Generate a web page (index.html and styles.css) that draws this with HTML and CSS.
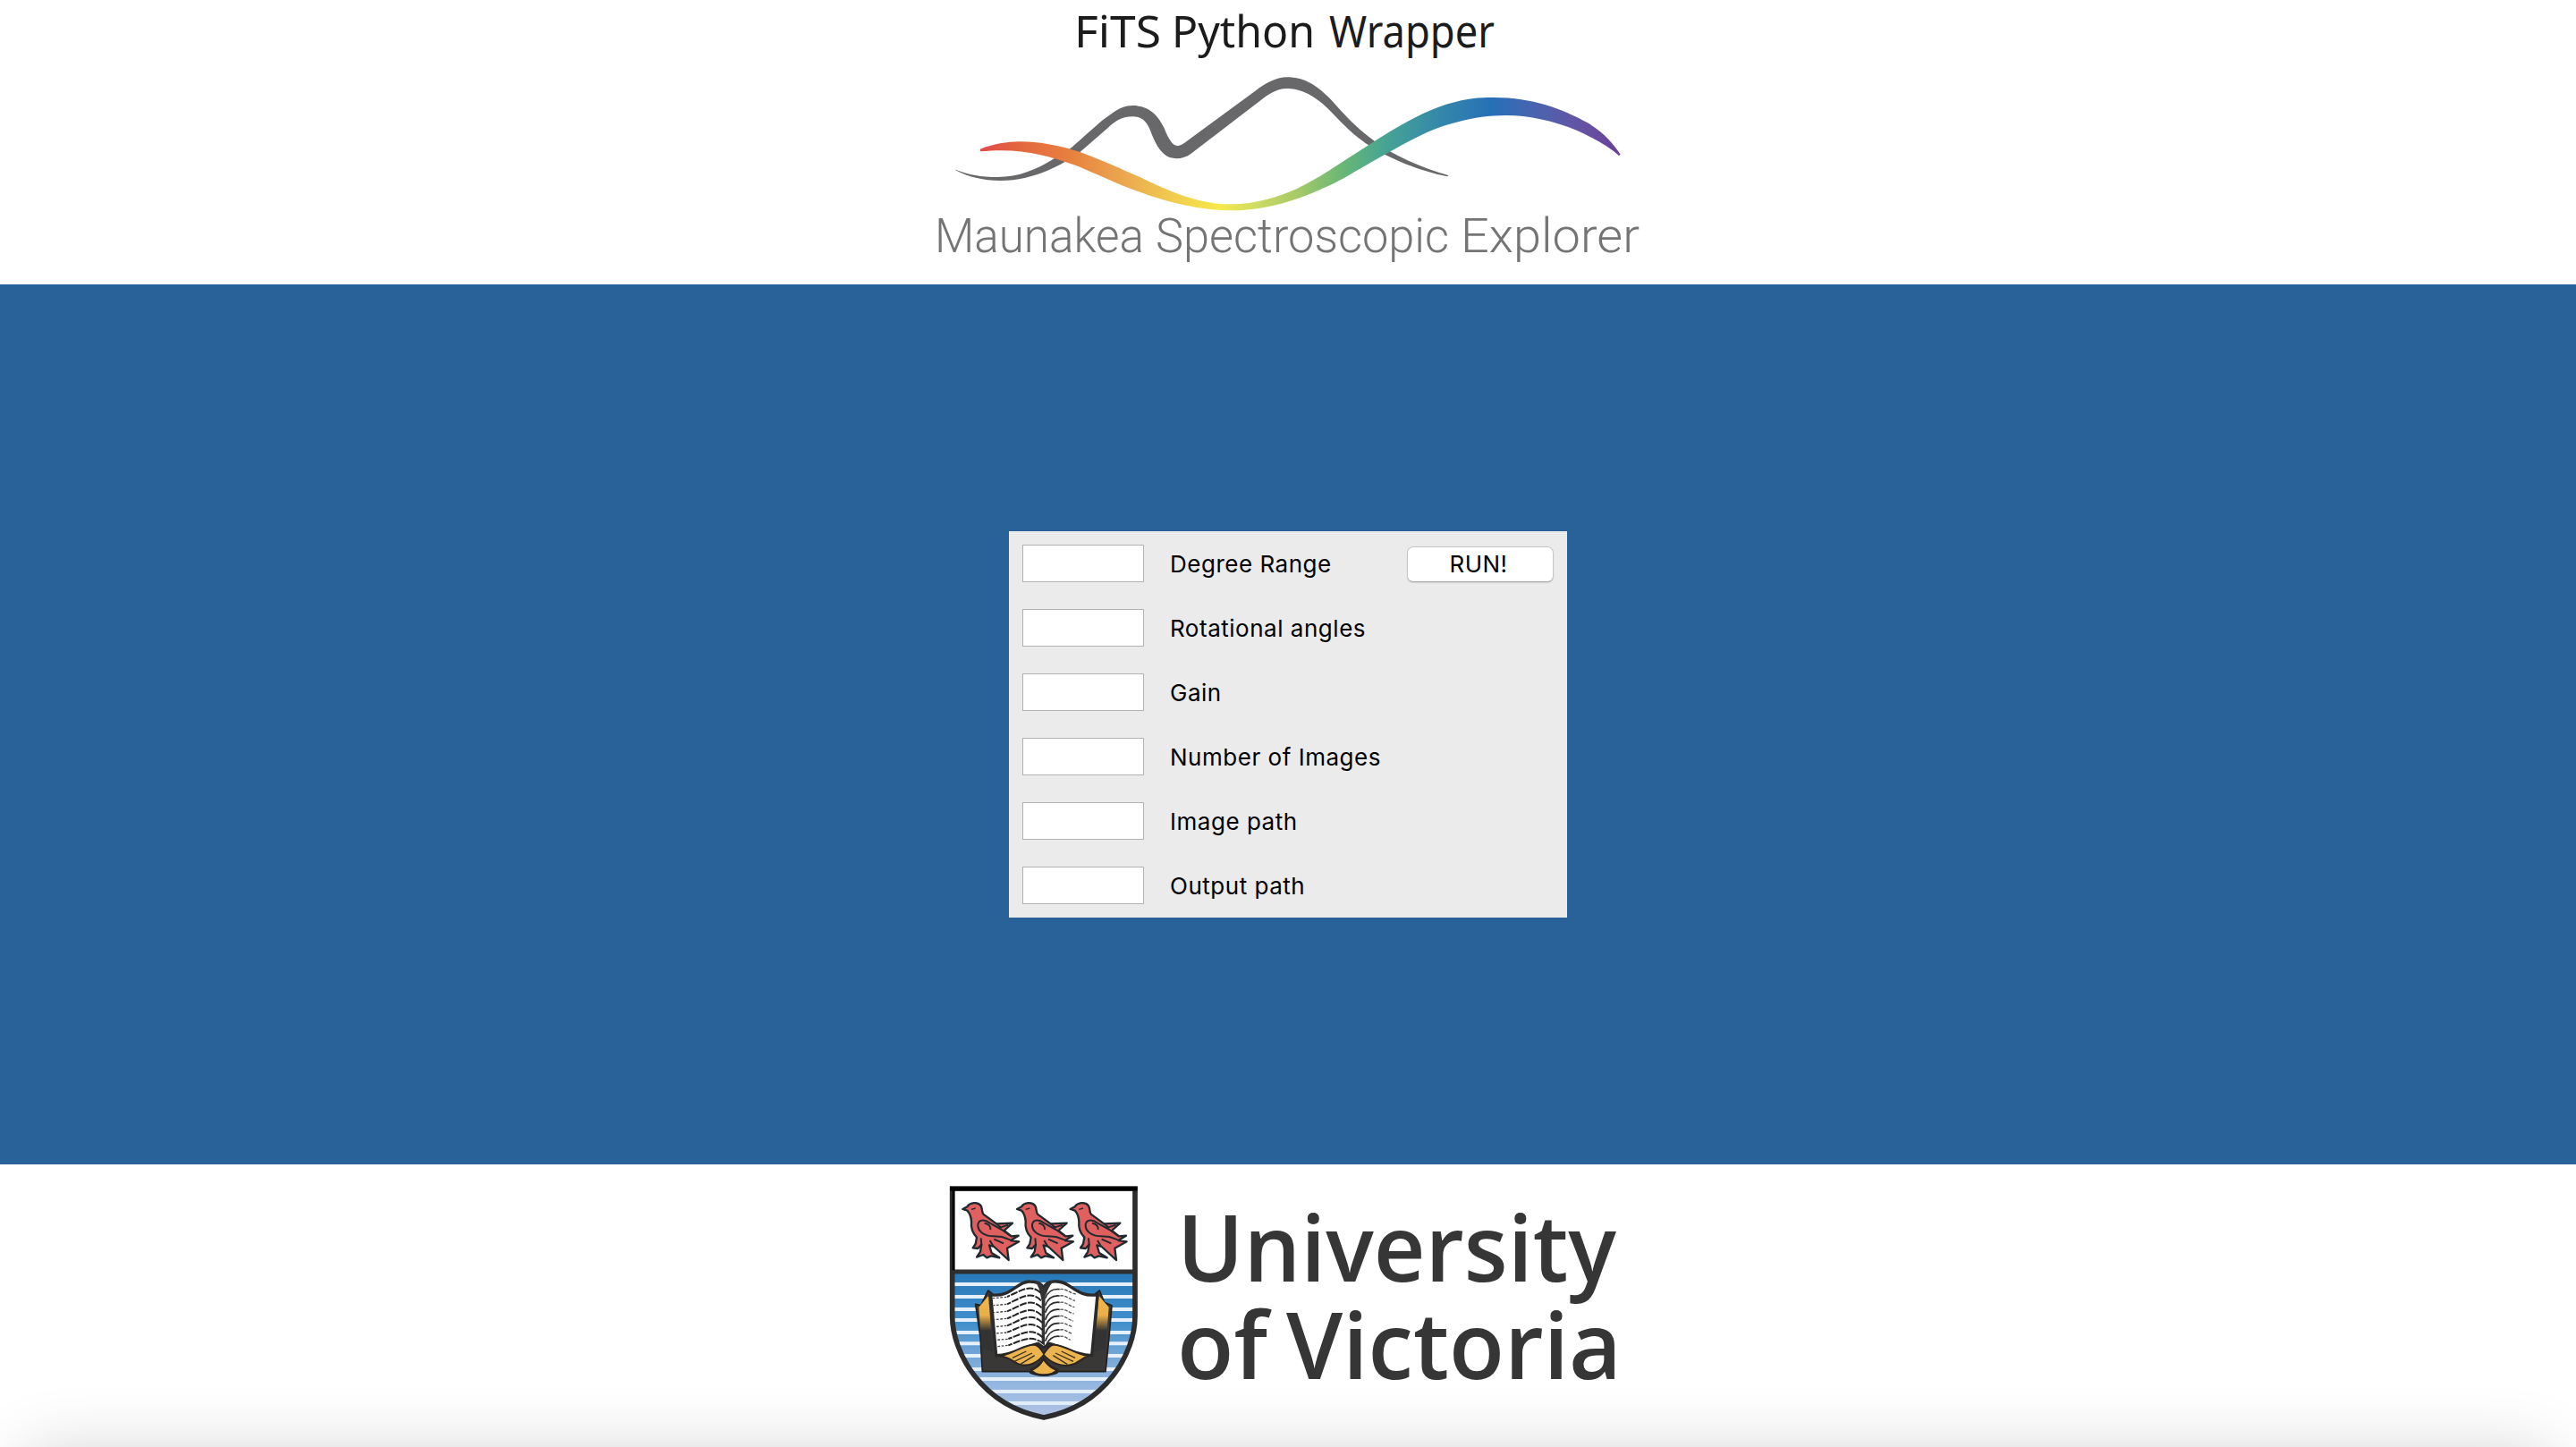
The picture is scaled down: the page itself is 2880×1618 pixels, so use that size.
FILE: index.html
```html
<!DOCTYPE html>
<html lang="en">
<head>
<meta charset="utf-8">
<title>FiTS Python Wrapper</title>
<link rel="stylesheet" href="styles.css">
</head>
<body>
<header class="banner">
  <svg class="banner-logo" viewBox="1030 0 820 318" width="820" height="318">
    <defs>
      <linearGradient id="spectrum" gradientUnits="userSpaceOnUse" x1="198" y1="0" x2="2343" y2="0">
        <stop offset="0" stop-color="#e04a4a"/>
        <stop offset=".06" stop-color="#e3663f"/>
        <stop offset=".14" stop-color="#e8803f"/>
        <stop offset=".23" stop-color="#ebaa50"/>
        <stop offset=".3" stop-color="#f1cb4f"/>
        <stop offset=".375" stop-color="#f6e94a"/>
        <stop offset=".43" stop-color="#cfdc62"/>
        <stop offset=".5" stop-color="#a2c968"/>
        <stop offset=".57" stop-color="#66b676"/>
        <stop offset=".64" stop-color="#44a296"/>
        <stop offset=".71" stop-color="#378aa8"/>
        <stop offset=".8" stop-color="#2670b8"/>
        <stop offset=".87" stop-color="#4b63af"/>
        <stop offset=".94" stop-color="#6553a3"/>
        <stop offset="1" stop-color="#6a3f98"/>
      </linearGradient>
    </defs>
    <text class="app-title" x="1201" y="53" textLength="97" lengthAdjust="spacingAndGlyphs">FiTS</text>
    <text class="app-title" x="1310" y="53" textLength="160" lengthAdjust="spacingAndGlyphs">Python</text>
    <text class="app-title" x="1486" y="53" textLength="185" lengthAdjust="spacingAndGlyphs">Wrapper</text>
    <g transform="translate(1030 0) scale(.33333)">
      <path fill="#68686a" d="M115 569C160 586 200 594 255 594C330 594 385 568 436 538L500 498C540 465 600 405 640 380C662 363 685 354 710 354C770 354 798 395 815 430C830 470 845 489 858 489C870 489 882 480 895 470L1120 305C1160 275 1195 259 1225 259C1290 259 1330 290 1375 335C1420 385 1460 430 1520 473C1590 525 1680 563 1768 588L1765 592C1670 574 1570 532 1500 487C1440 447 1400 400 1365 365C1310 312 1265 297 1225 297C1190 297 1160 320 1140 335L905 515C880 535 840 537 818 520C790 498 777 460 765 430C750 400 735 391 710 391C670 391 645 410 625 430L530 512C475 550 380 606 265 606C210 606 160 595 115 571Z"/>
      <path fill="url(#spectrum)" d="M198 500C240 483 290 475 330 475C400 475 450 488 500 500C570 520 680 570 750 602C850 650 940 685 1040 685C1120 685 1200 660 1260 633C1340 595 1400 550 1500 487C1600 423 1700 362 1800 340C1830 331 1870 327 1920 327C2050 327 2150 365 2235 412C2290 445 2320 480 2345 518L2340 522C2310 495 2260 465 2200 438C2120 405 2040 387 1960 387C1850 387 1750 420 1690 447C1600 490 1500 550 1430 590C1350 635 1200 706 1040 706C900 706 760 655 700 632C640 610 560 570 510 552C420 520 330 495 198 508Z"/>
    </g>
    <text class="logo-name" x="1045" y="282" textLength="234" lengthAdjust="spacingAndGlyphs">Maunakea</text>
    <text class="logo-name" x="1292" y="282" textLength="328" lengthAdjust="spacingAndGlyphs">Spectroscopic</text>
    <text class="logo-name" x="1633" y="282" textLength="200" lengthAdjust="spacingAndGlyphs">Explorer</text>
  </svg>
</header>

<main class="stage">
  <form class="panel">
    <div class="row"><input class="entry" type="text" id="f1"><label class="caption" for="f1">Degree Range</label><button class="run" type="button">RUN!</button></div>
    <div class="row"><input class="entry" type="text" id="f2"><label class="caption" for="f2">Rotational angles</label></div>
    <div class="row"><input class="entry" type="text" id="f3"><label class="caption" for="f3">Gain</label></div>
    <div class="row"><input class="entry" type="text" id="f4"><label class="caption" for="f4">Number of Images</label></div>
    <div class="row"><input class="entry" type="text" id="f5"><label class="caption" for="f5">Image path</label></div>
    <div class="row"><input class="entry" type="text" id="f6"><label class="caption" for="f6">Output path</label></div>
  </form>
</main>

<footer class="foot">
  <svg class="foot-logo" viewBox="1030 1302 820 316" width="820" height="316">
    <defs>
      <linearGradient id="sea" gradientUnits="userSpaceOnUse" x1="0" y1="385" x2="0" y2="870">
        <stop offset="0" stop-color="#2879b8"/>
        <stop offset=".35" stop-color="#4290cb"/>
        <stop offset=".6" stop-color="#7aa9d8"/>
        <stop offset="1" stop-color="#b6c9ea"/>
      </linearGradient>
      <linearGradient id="edge" x1="0" y1="0" x2="0" y2="1">
        <stop offset="0" stop-color="#f2b84a"/>
        <stop offset=".35" stop-color="#e9ae48"/>
        <stop offset=".62" stop-color="#333"/>
      </linearGradient>
      <clipPath id="shield"><path d="M74 102V530C74 650 170 830 381 870C592 830 687 650 687 530V102Z"/></clipPath>
      <g id="bird" stroke="#1f2a30" stroke-width="7" stroke-linejoin="round">
        <path fill="#e0605f" d="M109 171L124 163C133 149 160 145 170 160C176 170 172 180 178 188L222 220L276 218L248 243L272 262L296 260L270 276L298 280L258 302L263 342L214 297L198 292L206 318L232 334L204 328L190 334L178 324L156 332L168 314L172 290L160 303L143 301L152 288L156 266C140 250 136 232 138 212C137 198 132 184 124 176Z"/>
        <path fill="none" stroke-width="6" d="M212 262C180 262 158 244 160 222C165 204 184 206 200 218L240 240L272 262M182 218C196 220 204 230 202 240M212 262L240 264L268 274M214 272L246 286M222 220L236 232L262 224M200 276L212 296M172 290L170 268"/>
        <path fill="none" stroke-width="4" d="M138 172L152 168"/>
      </g>
    </defs>
    <g transform="translate(1040 1295) scale(.33333)">
      <g clip-path="url(#shield)">
        <path fill="#fff" d="M60 90H700V380H60Z"/>
        <path fill="url(#sea)" d="M60 380H700V880H60Z"/>
        <path stroke="#e6f0fa" stroke-width="12" d="M60 423H700M60 465H700M60 507H700M60 543H700M60 585H700M60 622H700M60 663H700M60 708H700M60 741H700M60 783H700M60 822H700"/>
      </g>
      <path stroke="#302f2f" stroke-width="15" d="M74 381H687"/>
      <path fill="none" stroke="#2d2d2d" stroke-width="17" d="M74 102V530C74 650 170 830 381 870C592 830 687 650 687 530V102Z"/>
      <path stroke="#000" stroke-width="13" d="M66 103H695"/>
      <path stroke="#000" stroke-width="8" d="M78 108V376"/>
      <use href="#bird"/>
      <use href="#bird" x="182"/>
      <use href="#bird" x="361"/>

      <path fill="#3a3837" stroke="#221f1f" stroke-width="5" stroke-linejoin="round" d="M152 490L170 494L194 444L212 458L382 600L550 458L568 444L584 484L609 494L600 600L588 716H430C420 732 340 732 332 716H175L168 600Z"/>
      <path fill="url(#edge)" d="M163 500L195 462L210 650L174 640Z"/>
      <path fill="url(#edge)" d="M599 500L566 462L550 650L588 640Z"/>
      <path fill="#fff" stroke="#2b2a2a" stroke-width="10" stroke-linejoin="round" d="M203 458C270 470 290 412 335 414C358 414 374 422 380 436C386 422 400 412 425 414C470 412 490 470 561 458L542 662C480 660 430 628 400 622L381 636L362 622C330 628 280 660 221 662Z"/>
      <path fill="#353334" d="M346 410C364 412 376 424 382 436C390 422 402 412 418 410C400 424 396 440 386 462L384 630L374 622V478C368 450 366 426 346 410Z"/>
      <path fill="none" stroke="#242424" stroke-width="6" stroke-dasharray="24 4" d="M370 452C336 418 300 448 258 465M372 478C336 440 300 472 258 490M374 502C336 464 300 498 258 514M374 528C336 490 300 522 258 538M376 552C336 512 300 546 258 562M376 576C336 538 300 570 258 584M378 602C338 564 306 592 262 606M380 622C338 590 306 612 262 628"/>
      <path fill="none" stroke="#444" stroke-width="4" stroke-dasharray="8 5" d="M256 466L210 470M256 490L212 494M256 514L214 518M256 538L216 542M256 562L218 566M256 585L220 588M260 607L222 610M260 628L224 632"/>
      <path fill="none" stroke="#2d2d2d" stroke-width="5" d="M386 470C396 442 416 438 434 440M386 494C396 466 416 460 434 462M386 518C396 488 416 482 434 484M386 542C396 512 416 506 434 508M386 566C396 536 416 528 434 530M386 590C396 560 416 552 434 554M386 614C396 584 416 574 434 576M388 628C400 602 418 596 434 598"/>
      <path fill="none" stroke="#555" stroke-width="4" stroke-dasharray="11 4" d="M436 440C452 436 468 452 488 456M436 462C452 458 468 474 486 478M436 484C452 480 466 496 484 500M436 508C452 504 464 518 482 522M436 530C450 526 462 542 480 546M436 554C450 550 462 562 478 566M436 576C450 572 460 584 474 588M436 598C450 594 460 606 470 610"/>
      <path fill="#ecb44f" stroke="#2b2522" stroke-width="6" d="M232 664C280 658 310 624 350 626C366 628 374 644 381 656C390 644 398 628 412 626C450 624 484 658 532 664C500 672 500 690 470 694C440 702 400 684 381 660C362 684 330 702 300 692C280 686 270 668 232 664Z"/>
      <path fill="none" stroke="#3a2f24" stroke-width="4" d="M276 670L322 648M282 682L342 654M302 692L350 662M486 670L440 648M480 682L420 654M460 692L412 662"/>
      <path fill="#ecb44f" stroke="#2b2522" stroke-width="8" stroke-linejoin="round" d="M380 672C370 692 356 704 338 710C350 734 410 734 426 710C406 704 392 692 380 672Z"/>
    </g>
    <text class="uni" x="1316" y="1433" textLength="491" lengthAdjust="spacingAndGlyphs">University</text>
    <text class="uni" x="1316" y="1541.500" textLength="101" lengthAdjust="spacingAndGlyphs">of</text>
    <text class="uni" x="1438" y="1541.500" textLength="375" lengthAdjust="spacingAndGlyphs">Victoria</text>
  </svg>
</footer>
</body>
</html>
```
FILE: styles.css
```css
* { box-sizing: border-box; }

body {
  margin: 0;
  height: 1618px;
  display: flex;
  flex-direction: column;
  background: #fff;
  overflow: hidden;
}

.banner,
.foot {
  display: flex;
  justify-content: center;
}

.banner { height: 318px; }
.foot { height: 316px; position: relative; overflow: hidden; }

/* soft shadow rising from the bottom edge of the screen */
.foot::after {
  content: "";
  position: absolute;
  left: 30px;
  right: 30px;
  top: 326px;
  height: 200px;
  box-shadow: 0 0 80px rgba(0, 0, 0, .2);
}

.banner-logo,
.foot-logo { display: block; }

.app-title {
  font: 400 48.500px "Noto Sans", sans-serif;
  fill: #1c1c1c;
}

.logo-name {
  font: 300 53px Roboto, sans-serif;
  fill: #747474;
}

.uni {
  font: 600 104px "Open Sans", sans-serif;
  fill: #363636;
}

.stage {
  flex: 1;
  display: flex;
  align-items: center;
  justify-content: center;
  background: #286299;
}

.panel {
  width: 624px;
  height: 432px;
  display: grid;
  grid-template-rows: repeat(6, 72px);
  background: #ebebeb;
}

.row {
  display: flex;
  align-items: center;
  padding: 0 15px;
}

.entry {
  width: 136px;
  height: 42px;
  margin: 0 29px 0 0;
  padding: 0 6px;
  border: 1px solid #b1b1b1;
  background: #fff;
}

.caption,
.run {
  font: 400 26px/36px Inter, sans-serif;
  letter-spacing: .52px;
  color: #000;
}

.caption { padding-top: 2px; }

.run {
  width: 164px;
  height: 40px;
  margin: 2px 0 0 auto;
  padding: 0 4px 0 0;
  border: 1px solid #c6c6c6;
  border-bottom-color: #acacac;
  border-radius: 7px;
  background: #fff;
  box-shadow: 0 1px 1px rgba(0, 0, 0, .12);
  line-height: 34px;
}
```
